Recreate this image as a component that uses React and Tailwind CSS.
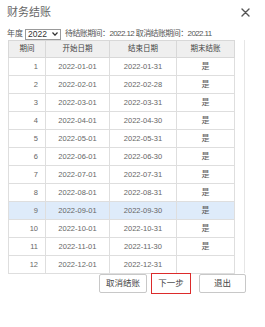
import React from 'react';

const rows = [
  ['1', '2022-01-01', '2022-01-31', '是'],
  ['2', '2022-02-01', '2022-02-28', '是'],
  ['3', '2022-03-01', '2022-03-31', '是'],
  ['4', '2022-04-01', '2022-04-30', '是'],
  ['5', '2022-05-01', '2022-05-31', '是'],
  ['6', '2022-06-01', '2022-06-30', '是'],
  ['7', '2022-07-01', '2022-07-31', '是'],
  ['8', '2022-08-01', '2022-08-31', '是'],
  ['9', '2022-09-01', '2022-09-30', '是'],
  ['10', '2022-10-01', '2022-10-31', '是'],
  ['11', '2022-11-01', '2022-11-30', '是'],
  ['12', '2022-12-01', '2022-12-31', ''],
];

export default function App() {
  return (
    <div className="w-[265px] h-[327px] bg-white text-[#555] font-['Liberation_Sans','Noto_Sans_CJK_SC',sans-serif] overflow-hidden">
      {/* title bar */}
      <div className="h-[25px] flex items-center justify-between pl-[7px] pr-[15px]">
        <span className="text-[11px] text-[#666] leading-none">财务结账</span>
        <svg width="9" height="9" viewBox="0 0 9 9" className="text-[#555]">
          <path d="M1 1 L8 8 M8 1 L1 8" stroke="currentColor" strokeWidth="1.4" strokeLinecap="round" />
        </svg>
      </div>

      {/* toolbar */}
      <div className="h-[15px] flex items-center pl-[7px] pt-[3px] text-[8px] leading-none text-[#555]">
        <span>年度</span>
        <div className="ml-[2px] w-[36px] h-[11px] border border-[#999] flex items-center justify-between px-[2px] text-[8.5px] text-[#333]">
          <span>2022</span>
          <svg width="6" height="4" viewBox="0 0 6 4">
            <path d="M0.5 0.5 L3 3.2 L5.5 0.5" stroke="#333" strokeWidth="1.2" fill="none" />
          </svg>
        </div>
        <span className="ml-[4px] tracking-[-0.6px]">待结账期间：2022.12 取消结账期间：2022.11</span>
      </div>

      {/* table */}
      <div className="ml-[8px] w-[237px] h-[233px] border-r border-[#e6e6e6]">
        <table className="border-collapse table-fixed w-[226px] text-[7.5px] leading-none text-[#666]">
          <colgroup>
            <col className="w-[37px]" />
            <col className="w-[64px]" />
            <col className="w-[67px]" />
            <col className="w-[58px]" />
          </colgroup>
          <thead>
            <tr className="h-[17px] bg-[#efefef] text-[#444]">
              {['期间', '开始日期', '结束日期', '期末结账'].map((h) => (
                <th key={h} className="border border-[#d8d8d8] font-normal text-center p-0">{h}</th>
              ))}
            </tr>
          </thead>
          <tbody>
            {rows.map((r) => (
              <tr key={r[0]} className={r[0] === '9' ? 'h-[18px] bg-[#deebfa]' : 'h-[18px]'}>
                <td className="border border-[#dedede] text-right pr-[7px]">{r[0]}</td>
                <td className="border border-[#dedede] text-center">{r[1]}</td>
                <td className="border border-[#dedede] text-center">{r[2]}</td>
                <td className="border border-[#dedede] text-center text-[8px] text-[#555]">{r[3]}</td>
              </tr>
            ))}
          </tbody>
        </table>
      </div>

      {/* buttons */}
      <div className="flex justify-end items-start pr-[19px] text-[8.5px] text-[#444]">
        <button className="w-[48px] h-[19px] mt-[1px] border border-[#c8c8c8] rounded-[2px] bg-white">取消结账</button>
        <button className="ml-[4px] w-[40px] h-[21px] border-[1.5px] border-[#dc2b2b] bg-white">下一步</button>
        <button className="ml-[8px] w-[47px] h-[19px] mt-[1px] border border-[#c8c8c8] rounded-[2px] bg-white">退出</button>
      </div>
    </div>
  );
}
